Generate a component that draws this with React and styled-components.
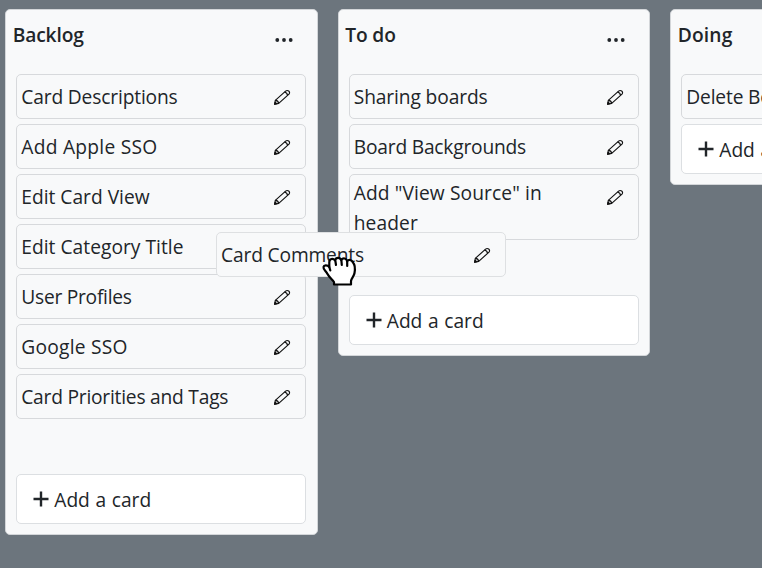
import React from 'react';
import styled, { createGlobalStyle } from 'styled-components';

const GlobalStyle = createGlobalStyle`
  * { box-sizing: border-box; }
  body {
    margin: 0;
    height: 568px;
    overflow: hidden;
    background: #6c757d;
    color: #212529;
    font: 400 19.2px/30px "Segoe UI", "Open Sans", sans-serif;
  }
`;

const Board = styled.main`
  position: relative;
  display: flex;
  align-items: flex-start;
  gap: 20px;
  width: 762px;
  height: 568px;
  padding: 9px 0 0 5.25px;
  overflow: hidden;
`;

const Column = styled.section`
  flex: 0 0 312.5px;
  padding: 0 10px 10px;
  background: #f8f9fa;
  border: 1px solid #d3d6d9;
  border-radius: 5px;
`;

const ColumnHeader = styled.header`
  display: flex;
  justify-content: space-between;
  height: 64px;
  padding: 10px 13px 0 0;
  margin-left: -3.5px;
`;

const Title = styled.h2`
  margin: 0;
  font-size: 19.2px;
  line-height: 30px;
  font-weight: 600;
  letter-spacing: ${(p) => p.$tracking}px;
`;

const Dots = styled.svg`
  width: 20px;
  height: 20px;
  margin-top: 10px;
  fill: #212529;
`;

const CardList = styled.div`
  display: flex;
  flex-direction: column;
  gap: 5px;
  padding-bottom: ${(p) => (p.$dropSpace ? 55 : 5)}px;
`;

const CardBox = styled.article`
  display: flex;
  justify-content: space-between;
  align-items: flex-start;
  width: 290px;
  height: ${(p) => (p.$tall ? 66 : 45)}px;
  padding: ${(p) => (p.$tall ? 3 : 7)}px 14px 0 4px;
  background: #f8f9fa;
  border: 1px solid #d7d9dc;
  border-radius: 5px;
`;

const CardText = styled.span`
  width: 222px;
  letter-spacing: ${(p) => p.$tracking}px;
`;

const PencilSvg = styled.svg`
  flex: none;
  width: 18px;
  height: 18px;
  margin-top: ${(p) => (p.$tall ? 10 : 6)}px;
  fill: none;
  stroke: #111;
  stroke-width: 1.15;
  stroke-linejoin: round;
`;

const AddButton = styled.button`
  display: flex;
  align-items: center;
  gap: 5px;
  width: 290px;
  height: 50px;
  padding: 2px 0 0 16px;
  background: #fff;
  border: 1px solid #dcdfe2;
  border-radius: 5px;
  color: inherit;
  font: inherit;
  white-space: nowrap;
  word-spacing: 0.6px;
`;

const Plus = styled.svg`
  width: 16px;
  height: 16px;
  margin-top: -3px;
  stroke: #212529;
  stroke-width: 2.4;
`;

const Dragged = styled.div`
  position: absolute;
  left: 216px;
  top: 232px;
  ${CardBox} { border-color: #dee0e2; }
`;

const GrabHand = styled.svg`
  position: absolute;
  left: 104px;
  top: 23px;
  width: 38px;
  height: 33px;
  fill: #fff;
  stroke: #000;
  stroke-width: 2.2;
  stroke-linejoin: round;
  stroke-linecap: round;
`;

function Pencil({ tall }) {
  return (
    <PencilSvg viewBox="0 0 18 18" $tall={tall}>
      <path d="M1.7 16.3 L2.3 12.4 L12.6 3.1 C14.6 1.5 17.7 3.6 16 6.1 L5.7 15.4 Z" />
      <path d="M2.3 12.4 C4.1 12.4 5.4 13.6 5.7 15.4 M11.5 4.1 C13.1 4.3 14.3 5.5 14.5 7.4" />
      <path d="M1.7 16.3 L2 14.3 L3.8 15.8 Z" fill="#111" />
    </PencilSvg>
  );
}

function Card({ text, tracking = 0, tall }) {
  return (
    <CardBox $tall={tall}>
      <CardText $tracking={tracking}>{text}</CardText>
      <Pencil tall={tall} />
    </CardBox>
  );
}

const columns = [
  {
    title: 'Backlog',
    tracking: -0.15,
    dropSpace: true,
    cards: [
      { text: 'Card Descriptions', tracking: -0.15 },
      { text: 'Add Apple SSO', tracking: 0.27 },
      { text: 'Edit Card View', tracking: 0 },
      { text: 'Edit Category Title', tracking: 0.03 },
      { text: 'User Profiles', tracking: -0.25 },
      { text: 'Google SSO', tracking: 0.25 },
      { text: 'Card Priorities and Tags', tracking: -0.22 },
    ],
  },
  {
    title: 'To do',
    tracking: -0.15,
    dropSpace: true,
    cards: [
      { text: 'Sharing boards', tracking: -0.12 },
      { text: 'Board Backgrounds', tracking: -0.2 },
      { text: 'Add "View Source" in header', tracking: 0.1, tall: true },
    ],
  },
  { title: 'Doing', tracking: 0.15, cards: [{ text: 'Delete Boards', tracking: -0.15 }] },
];

export default function App() {
  return (
    <>
      <GlobalStyle />
      <Board>
        {columns.map((column) => (
          <Column key={column.title}>
            <ColumnHeader>
              <Title $tracking={column.tracking}>{column.title}</Title>
              <Dots viewBox="0 0 20 20">
                <circle cx="3.3" cy="10" r="1.9" />
                <circle cx="10" cy="10" r="1.9" />
                <circle cx="16.7" cy="10" r="1.9" />
              </Dots>
            </ColumnHeader>
            <CardList $dropSpace={column.dropSpace}>
              {column.cards.map((card) => (
                <Card key={card.text} {...card} />
              ))}
            </CardList>
            <AddButton>
              <Plus viewBox="0 0 16 16">
                <path d="M8 0.5V15.5M0.5 8H15.5" />
              </Plus>
              Add a card
            </AddButton>
          </Column>
        ))}
        <Dragged>
          <Card text="Card Comments" tracking={-0.15} />
          <GrabHand viewBox="0 0 38 33">
            <path d="M14 29.5 V27 C12 24 9 22 7.5 19 C6 16 3 14.5 3.5 12 C4 9.5 7.5 10 9.3 12 V7 C9.5 3.5 13 3 15 5.3 C16 2 20 2 21.2 5 C23 2.5 26.5 3 27 6.2 C29 4 31.5 4.7 33 7.5 C35.2 10 35.2 14 34.5 18 C34 21.5 31.5 23 31 26 V29.5 Z" />
            <path d="M9.3 12 L10.3 15.5 M15.3 5.5 L16 10 M21.4 5.5 L21.8 10 M27.2 6.5 V11" />
          </GrabHand>
        </Dragged>
      </Board>
    </>
  );
}
